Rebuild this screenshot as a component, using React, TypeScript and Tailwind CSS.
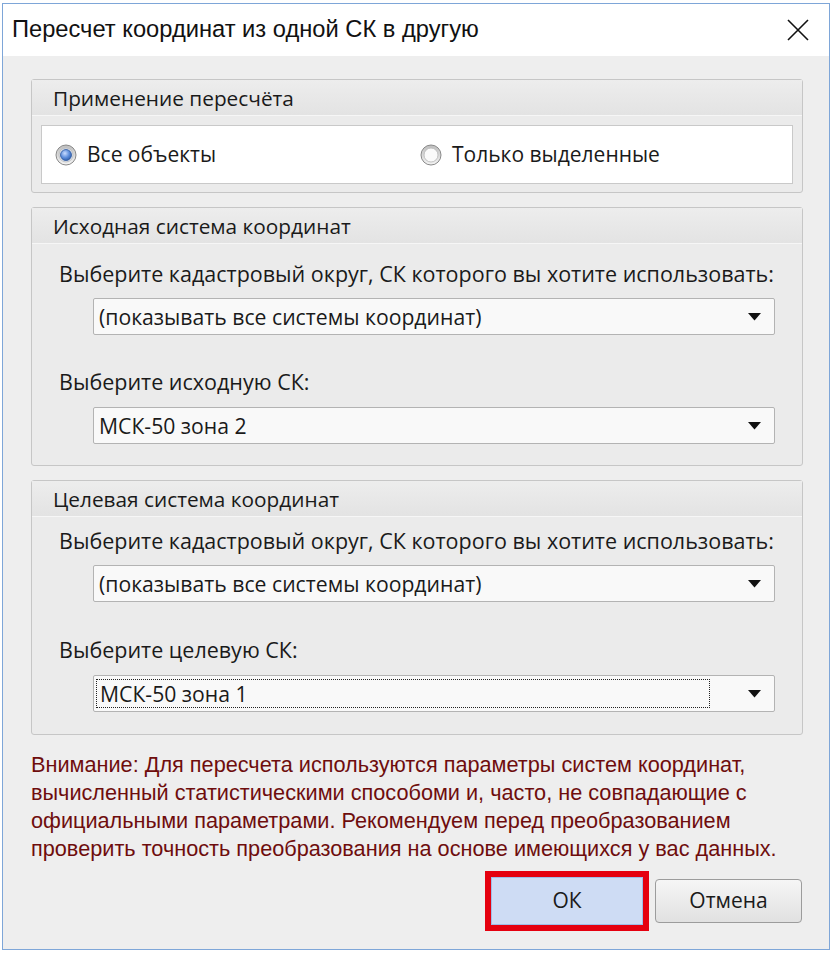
import React from 'react'

const font = { fontFamily: '"Open Sans", "Liberation Sans", Arial, sans-serif' }
const narrow = { fontFamily: '"Liberation Sans", Arial, sans-serif' }

function Radio({ checked }: { checked?: boolean }) {
  return (
    <svg width="22" height="22" viewBox="0 0 22 22">
      <defs>
        <radialGradient id="rg-dot" cx="40%" cy="35%" r="70%">
          <stop offset="0%" stopColor="#c9dcff" />
          <stop offset="55%" stopColor="#5f8fdc" />
          <stop offset="100%" stopColor="#2c5aa8" />
        </radialGradient>
        <linearGradient id="rg-ring" x1="0" y1="0" x2="0" y2="1">
          <stop offset="0%" stopColor="#bdbdbd" />
          <stop offset="100%" stopColor="#f4f4f4" />
        </linearGradient>
      </defs>
      <circle cx="11" cy="11" r="10" fill="url(#rg-ring)" stroke="#8a8a8a" strokeWidth="1" />
      <circle cx="11" cy="11" r="7" fill={checked ? '#e8eef8' : '#fafafa'} stroke="#b5b5b5" strokeWidth="0.8" />
      {checked && <circle cx="11" cy="11" r="5.5" fill="url(#rg-dot)" stroke="#2d5799" strokeWidth="0.8" />}
    </svg>
  )
}

function Arrow() {
  return (
    <svg width="13" height="8" viewBox="0 0 13 8">
      <path d="M0 0h13L6.5 7.5z" fill="#111" />
    </svg>
  )
}

function Select({ value, focused }: { value: string; focused?: boolean }) {
  return (
    <div className="ml-[61px] mr-[27px] h-[37px] flex items-center border border-[#b3b3b3] bg-[#f9f9f9] rounded-[2px]">
      <div className="flex-1 h-full flex items-center pl-[2px] py-[3px]">
        <div
          className={`h-full flex-1 flex items-center pl-[3px] pt-[1px] ${
            focused ? 'border border-dotted border-[#222] mr-[30px]' : ''
          }`}
        >
          <span className="text-[21.2px] text-[#1a1a1a] leading-none">{value}</span>
        </div>
      </div>
      <div className="w-[34px] flex justify-center pr-[6px]">
        <Arrow />
      </div>
    </div>
  )
}

function Group({ title, children, className = '' }: { title: string; children: React.ReactNode; className?: string }) {
  return (
    <div className={`border border-[#c6c6c6] rounded-[3px] bg-[#ebebeb] ${className}`}>
      <div className="h-[36px] flex items-center pt-[2px] px-[21px] bg-gradient-to-b from-[#ededed] to-[#e3e3e3] border-b border-[#f6f6f6]">
        <span className="text-[20.8px] text-[#1a1a1a]">{title}</span>
      </div>
      {children}
    </div>
  )
}

function Label({ text, className = '' }: { text: string; className?: string }) {
  return <div className={`pl-[27px] h-[24px] flex items-center text-[21.5px] text-[#1a1a1a] ${className}`}>{text}</div>
}

export default function App() {
  return (
    <div className="w-[832px] h-[954px] bg-white overflow-hidden" style={font}>
      <div className="ml-[2px] mt-[3px] w-[828px] h-[947px] border border-[#7ea6d8] flex flex-col bg-[#eeeeee]">
        {/* Title bar */}
        <div className="h-[52px] bg-white flex items-center justify-between pl-[9px] pr-[20px]">
          <span className="text-[23.7px] text-[#111]" style={narrow}>Пересчет координат из одной СК в другую</span>
          <svg width="22" height="22" viewBox="0 0 22 22">
            <path d="M1 1l20 20M21 1L1 21" stroke="#111" strokeWidth="1.6" />
          </svg>
        </div>

        <div className="flex-1 pt-[23px] pl-[28px] pr-[26px] flex flex-col">
          <Group title="Применение пересчёта">
            <div className="mx-[9px] mt-[9px] mb-[8px] h-[59px] bg-white border border-[#c9c9c9] flex items-center pt-[1px]">
              <div className="w-[378px] pl-[13px] flex items-center gap-[10px]">
                <Radio checked />
                <span className="text-[21px] text-[#1a1a1a]">Все объекты</span>
              </div>
              <div className="flex items-center gap-[10px]">
                <Radio />
                <span className="text-[21px] text-[#1a1a1a]">Только выделенные</span>
              </div>
            </div>
          </Group>

          <Group title="Исходная система координат" className="mt-[14px]">
            <Label className="mt-[18px]" text="Выберите кадастровый округ, СК которого вы хотите использовать:" />
            <div className="mt-[12px]">
              <Select value="(показывать все системы координат)" />
            </div>
            <Label className="mt-[35px]" text="Выберите исходную СК:" />
            <div className="mt-[13px] mb-[21px]">
              <Select value="МСК-50 зона 2" />
            </div>
          </Group>

          <Group title="Целевая система координат" className="mt-[14px]">
            <Label className="mt-[12px]" text="Выберите кадастровый округ, СК которого вы хотите использовать:" />
            <div className="mt-[12px]">
              <Select value="(показывать все системы координат)" />
            </div>
            <Label className="mt-[36px]" text="Выберите целевую СК:" />
            <div className="mt-[13px] mb-[22px]">
              <Select value="МСК-50 зона 1" focused />
            </div>
          </Group>

          <div className="mt-[16px] text-[21.7px] leading-[28px] text-[#6e0d0d]" style={narrow}>
            <div>Внимание: Для пересчета используются параметры систем координат,</div>
            <div>вычисленный статистическими способоми и, часто, не совпадающие с</div>
            <div>официальными параметрами. Рекомендуем перед преобразованием</div>
            <div>проверить точность преобразования на основе имеющихся у вас данных.</div>
          </div>

          <div className="mt-[8px] flex justify-end items-center gap-[6px] pr-[1px]">
            <div className="w-[164px] h-[60px] border-[6px] border-[#e5000f]">
              <div className="w-full h-full bg-[#cedcf4] border border-[#9fbde8] flex items-center justify-center">
                <span className="text-[21px] text-[#1a1a1a]">ОК</span>
              </div>
            </div>
            <div className="w-[147px] h-[44px] rounded-[4px] border border-[#9c9c9c] bg-gradient-to-b from-[#f6f6f6] to-[#e1e1e1] flex items-center justify-center">
              <span className="text-[21px] text-[#1a1a1a]">Отмена</span>
            </div>
          </div>
        </div>
      </div>
    </div>
  )
}
